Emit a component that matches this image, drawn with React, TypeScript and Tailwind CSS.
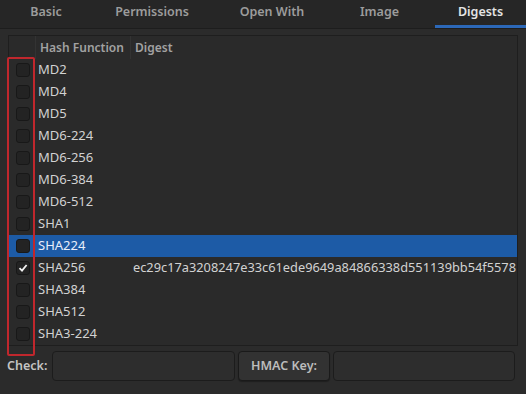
import React from "react";

const rows = [
  "MD2",
  "MD4",
  "MD5",
  "MD6-224",
  "MD6-256",
  "MD6-384",
  "MD6-512",
  "SHA1",
  "SHA224",
  "SHA256",
  "SHA384",
  "SHA512",
  "SHA3-224",
];

const tabs = [
  { label: "Basic", w: "w-[92px]" },
  { label: "Permissions", w: "w-[120px]" },
  { label: "Open With", w: "w-[120px]" },
  { label: "Image", w: "w-[95px]" },
  { label: "Digests", w: "w-[91px]", active: true },
];

function Check({ checked }: { checked?: boolean }) {
  return (
    <div className="w-[14px] h-[14px] rounded-[3px] bg-[#232323] border border-[#181818] flex items-center justify-center">
      {checked && (
        <svg width="10" height="10" viewBox="0 0 10 10">
          <path d="M1.5 5.2 L4 7.6 L8.6 2" stroke="#f2f2f2" strokeWidth="1.8" fill="none" />
        </svg>
      )}
    </div>
  );
}

export default function App() {
  return (
    <div
      className="relative w-[526px] h-[394px] bg-[#2b2b2b] overflow-hidden text-[13px] text-[#d2d2d2]"
      style={{ fontFamily: '"Noto Sans", "Open Sans", sans-serif' }}
    >
      <div className="h-[29px] flex bg-[#262626] border-b border-[#1d1d1d]">
        {tabs.map((t) => (
          <div
            key={t.label}
            className={`${t.w} ${t.active ? "ml-[8px]" : ""} relative flex items-center justify-center text-[12.5px] font-semibold ${
              t.active ? "text-[#e4e4e4]" : "text-[#9c9c9c]"
            }`}
          >
            <span className="-mt-[3px]">{t.label}</span>
            {t.active && <div className="absolute left-0 right-0 bottom-[0px] h-[3px] bg-[#2c68b8]" />}
          </div>
        ))}
      </div>

      <div className="px-[8px] pt-[6px]">
        <div className="border border-[#1e1e1e] bg-[#2a2a2a] w-[510px]">
          <div className="h-[23px] flex items-center text-[12px] font-semibold text-[#a2a2a2]">
            <div className="w-[27px] h-full border-r border-[#333]" />
            <div className="w-[95px] h-full flex items-center pl-[4px] border-r border-[#333]">Hash Function</div>
            <div className="pl-[4px]">Digest</div>
          </div>
          {rows.map((r) => {
            const selected = r === "SHA224";
            return (
              <div
                key={r}
                className={`h-[22px] flex items-center ${selected ? "bg-[#1d5ba6] text-[#e8eefa]" : ""}`}
              >
                <div className="w-[27px] flex justify-center pl-[1px]">
                  <Check checked={r === "SHA256"} />
                </div>
                <div className="w-[95px] pl-[2px]">{r}</div>
                {r === "SHA256" && (
                  <div className="flex-1 whitespace-nowrap pl-[2px] text-[12.8px]">
                    ec29c17a3208247e33c61ede9649a84866338d551139bb54f5578
                  </div>
                )}
              </div>
            );
          })}
        </div>
      </div>

      <div className="flex items-center px-[7px] mt-[5px] h-[30px] gap-[3px]">
        <div className="w-[42px] text-[12.5px] font-semibold text-[#c4c4c4]">Check:</div>
        <div className="w-[183px] h-[30px] rounded-[4px] bg-[#2d2d2d] border border-[#1c1c1c]" />
        <div className="w-[92px] h-[30px] rounded-[4px] bg-[#323232] border border-[#1a1a1a] flex items-center justify-center text-[12.5px] font-semibold text-[#bcbcbc] shadow-[0_1px_1px_rgba(0,0,0,0.3)]">
          HMAC Key:
        </div>
        <div className="flex-1 h-[30px] rounded-[4px] bg-[#2d2d2d] border border-[#1c1c1c] mr-[4px]" />
      </div>

      <div className="absolute left-[7px] top-[57px] w-[28px] h-[299px] border-2 border-[#c0272d] rounded-[2px]" />
    </div>
  );
}
